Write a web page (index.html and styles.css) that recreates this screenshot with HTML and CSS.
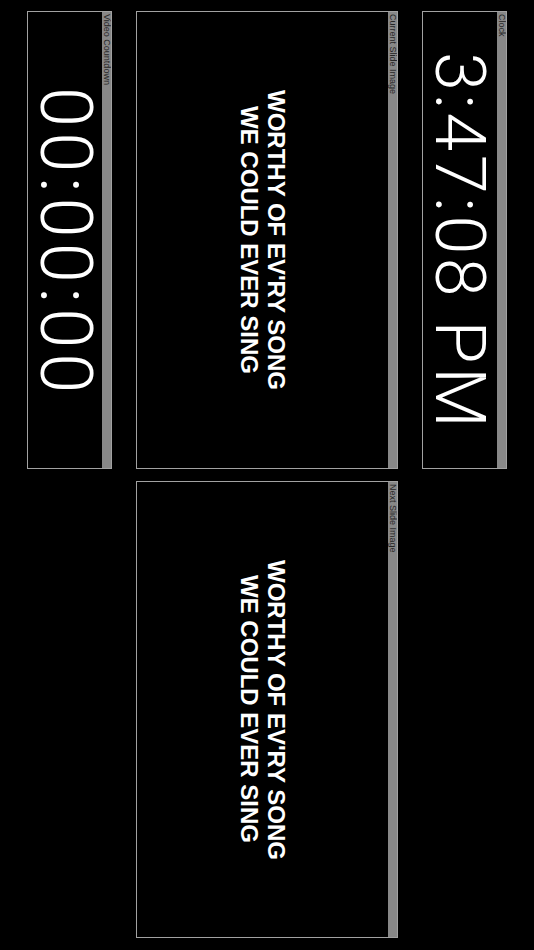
FILE: index.html
```html
<!DOCTYPE html>
<html>
<head>
<meta charset="utf-8">
<link rel="stylesheet" href="styles.css">
</head>
<body>
<div class="stage">
  <section class="panel clock">
    <div class="label">Clock</div>
    <div class="body"><span class="big time">3:47:08 PM</span></div>
  </section>
  <section class="panel current">
    <div class="label">Current Slide Image</div>
    <div class="body"><p class="lyric">WORTHY OF EV'RY SONG<br>WE COULD EVER SING</p></div>
  </section>
  <section class="panel next">
    <div class="label">Next Slide Image</div>
    <div class="body"><p class="lyric">WORTHY OF EV'RY SONG<br>WE COULD EVER SING</p></div>
  </section>
  <section class="panel countdown">
    <div class="label">Video Countdown</div>
    <div class="body"><span class="big digits">00:00:00</span></div>
  </section>
</div>
</body>
</html>
```
FILE: styles.css
```css
html, body {
  margin: 0;
  padding: 0;
  background: #000;
}
.stage {
  writing-mode: vertical-rl;
  width: 534px;
  height: 950px;
  box-sizing: border-box;
  display: grid;
  grid-template-columns: 458px 457px;
  grid-template-rows: 85px 262px 85px;
  column-gap: 12px;
  row-gap: 24px;
  padding-block-start: 27px;
  padding-inline-start: 11px;
  font-family: "Liberation Sans", Arial, sans-serif;
  color: #fff;
}
.panel {
  border: 1px solid #a2a2a2;
  display: flex;
  flex-direction: column;
  min-block-size: 0;
  min-inline-size: 0;
}
.clock { grid-column: 1; grid-row: 1; }
.current { grid-column: 1; grid-row: 2; }
.next { grid-column: 2; grid-row: 2; }
.countdown { grid-column: 1; grid-row: 3; }
.label {
  block-size: 9px;
  background: #888;
  color: #262626;
  font-size: 9px;
  line-height: 9px;
  padding-inline-start: 2px;
  white-space: nowrap;
  overflow: hidden;
}
.body {
  flex: 1;
  display: flex;
  align-items: center;
  justify-content: center;
  min-block-size: 0;
}
.big {
  font-family: Roboto, "Liberation Sans", sans-serif;
  font-weight: 300;
  font-size: 70px;
  line-height: 1;
  white-space: nowrap;
}
.time {
  letter-spacing: 3.5px;
  margin-inline-start: 3.5px;
}
.digits {
  font-size: 72px;
  letter-spacing: 5.2px;
  margin-inline-start: 5.2px;
}
.lyric {
  margin: 0;
  text-align: center;
  font-weight: bold;
  font-size: 24px;
  line-height: 27px;
  white-space: nowrap;
}
```
